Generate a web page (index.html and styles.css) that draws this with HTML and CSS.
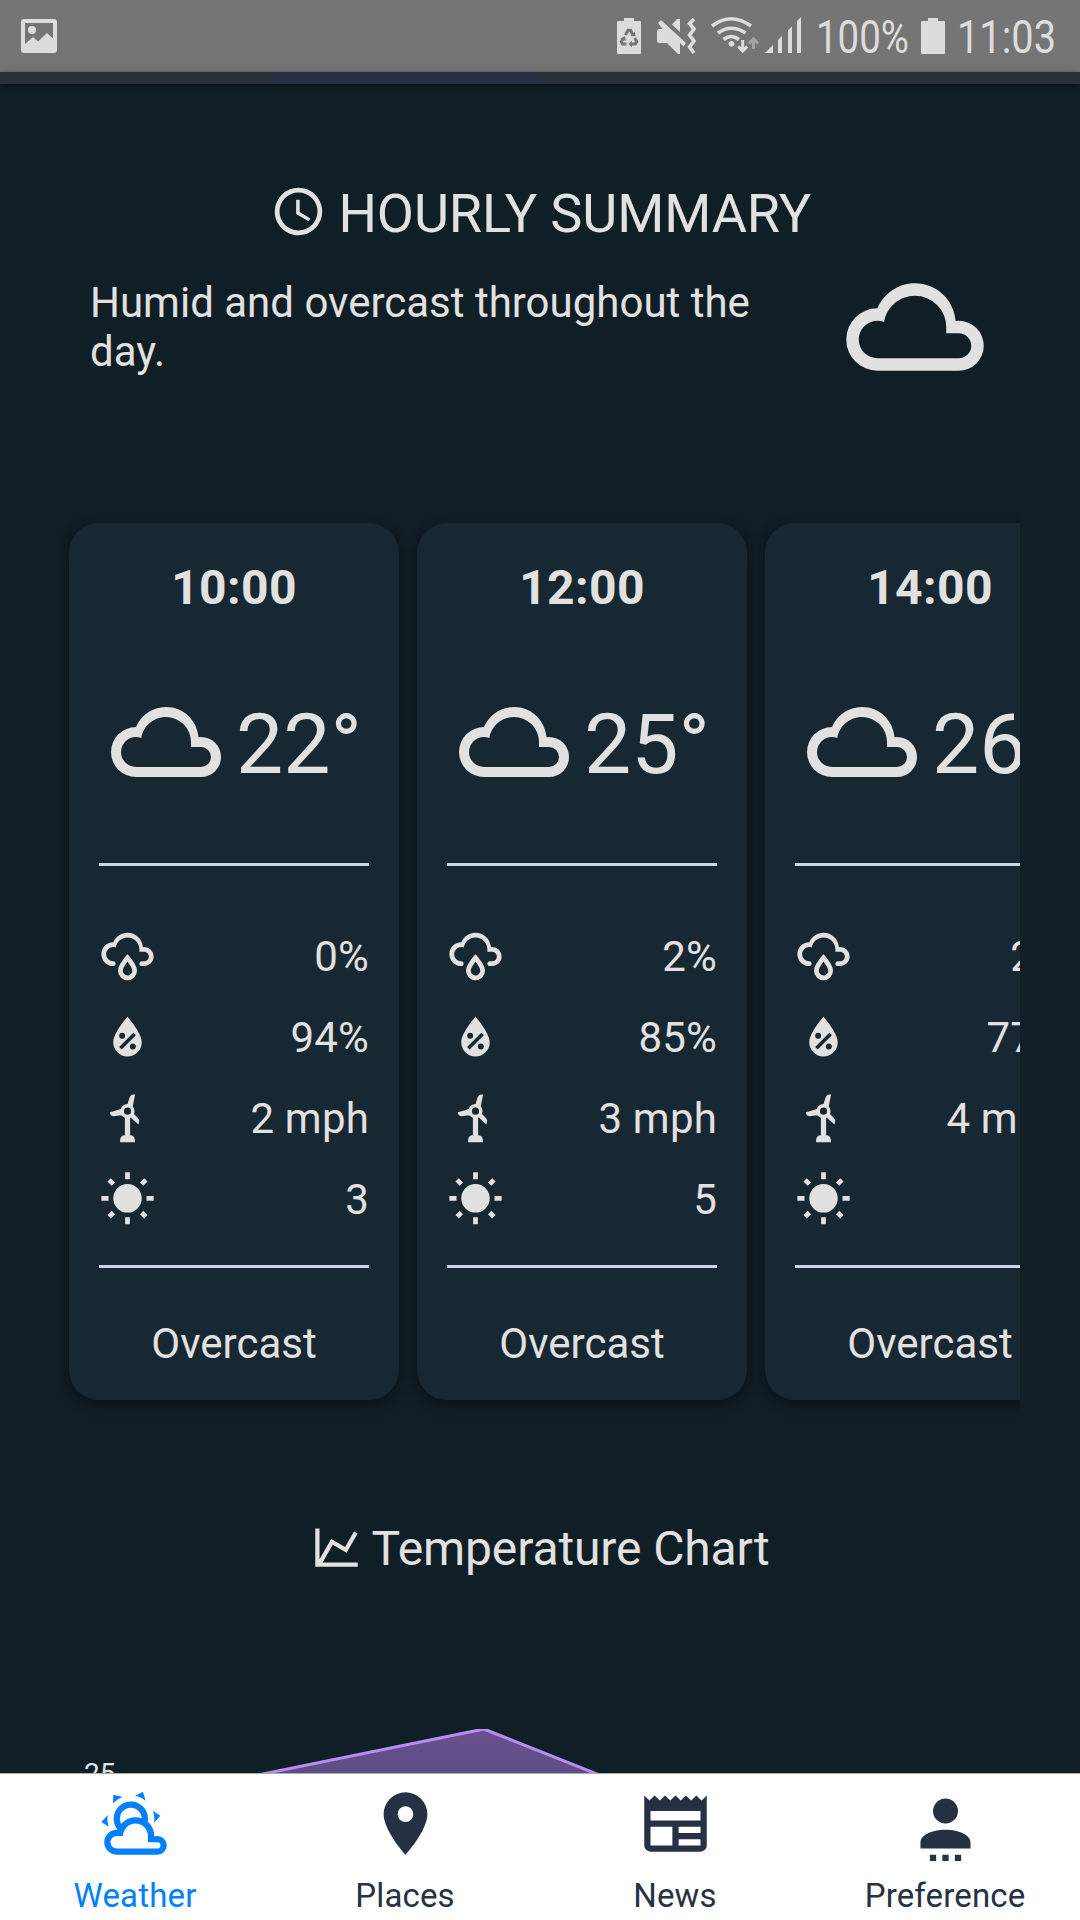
FILE: index.html
```html
<!DOCTYPE html>
<html lang="en">
<head>
<meta charset="utf-8">
<title>Weather</title>
<link rel="stylesheet" href="styles.css">
</head>
<body>
<svg class="sprite" aria-hidden="true">
  <symbol id="cloud" viewBox="0 0 24 24"><path d="M6,19A5,5 0 0,1 1,14A5,5 0 0,1 6,9C7,6.65 9.3,5 12,5C15.43,5 18.24,7.66 18.5,11.03L19,11A4,4 0 0,1 23,15A4,4 0 0,1 19,19H6M19,13H17V12A5,5 0 0,0 12,7C9.5,7 7.45,8.82 7.06,11.19C6.73,11.07 6.37,11 6,11A3,3 0 0,0 3,14A3,3 0 0,0 6,17H19A2,2 0 0,0 21,15A2,2 0 0,0 19,13Z"/></symbol>
  <symbol id="clock" viewBox="0 0 24 24"><path d="M12,20A8,8 0 0,0 20,12A8,8 0 0,0 12,4A8,8 0 0,0 4,12A8,8 0 0,0 12,20M12,2A10,10 0 0,1 22,12A10,10 0 0,1 12,22C6.47,22 2,17.5 2,12A10,10 0 0,1 12,2M12.5,7V12.25L17,14.92L16.25,16.15L11,13V7H12.5Z"/></symbol>
  <symbol id="rain" viewBox="0 0 24 24"><path d="M6,14.03A1,1 0 0,1 7,15.03C7,15.58 6.55,16.03 6,16.03C3.24,16.03 1,13.79 1,11.03C1,8.27 3.24,6.03 6,6.03C7,3.68 9.3,2.03 12,2.03C15.43,2.03 18.24,4.69 18.5,8.06L19,8.03A4,4 0 0,1 23,12.03C23,14.23 21.21,16.03 19,16.03H18C17.45,16.03 17,15.58 17,15.03C17,14.47 17.45,14.03 18,14.03H19A2,2 0 0,0 21,12.03A2,2 0 0,0 19,10.03H17V9.03C17,6.27 14.76,4.03 12,4.03C9.5,4.03 7.45,5.84 7.06,8.21C6.73,8.09 6.37,8.03 6,8.03A3,3 0 0,0 3,11.03A3,3 0 0,0 6,14.03M12,14.15C12.18,14.39 12.37,14.66 12.56,14.94C13,15.56 14,17.03 14,18C14,19.11 13.1,20 12,20A2,2 0 0,1 10,18C10,17.03 11,15.56 11.44,14.94C11.63,14.66 11.82,14.4 12,14.15M12,11.03L11.5,11.59C11.5,11.59 10.65,12.55 9.79,13.81C8.93,15.06 8,16.56 8,18A4,4 0 0,0 12,22A4,4 0 0,0 16,18C16,16.56 15.07,15.06 14.21,13.81C13.35,12.55 12.5,11.59 12.5,11.59"/></symbol>
  <symbol id="humidity" viewBox="0 0 24 24"><path d="M12,3.25C12,3.25 6,10 6,14C6,17.32 8.69,20 12,20A6,6 0 0,0 18,14C18,10 12,3.25 12,3.25M14.47,9.97L15.53,11.03L9.53,17.03L8.47,15.97M9.75,10A1.25,1.25 0 0,1 11,11.25A1.25,1.25 0 0,1 9.75,12.5A1.25,1.25 0 0,1 8.5,11.25A1.25,1.25 0 0,1 9.75,10M14.25,14.5A1.25,1.25 0 0,1 15.5,15.75A1.25,1.25 0 0,1 14.25,17A1.25,1.25 0 0,1 13,15.75A1.25,1.25 0 0,1 14.25,14.5Z" fill-rule="evenodd"/></symbol>
  <symbol id="turbine" viewBox="0 0 24 24"><path fill-rule="evenodd" d="M12,5.9A3,3 0 0,1 12,11.9A3,3 0 0,1 12,5.9M12,7.4A1.5,1.5 0 0,0 12,10.4A1.5,1.5 0 0,0 12,7.4Z"/><path d="M11.9,6.3L12.8,3.4C13.1,2.4 13.7,1.9 14.4,1.9H15.2L14.2,6.9L13.4,6.5ZM9.5,7.9L5.8,9.1C5,9.3 4.6,9.3 4.6,9.7C4.7,10.5 5.2,11 6,11C7,11 8.2,10.7 9.7,10.7ZM14.3,9.7L16.2,11.6C16.8,12.3 17,12.8 16.9,13.3L16.6,14.5L13,11.3ZM10.9,11.5H13.1V19C14.3,19 15.1,19.8 15.1,21V22H8.9V21C8.9,19.8 9.7,19 10.9,19Z"/></symbol>
  <symbol id="sun" viewBox="0 0 24 24"><path d="M3.55,18.54L4.96,19.95L6.76,18.16L5.34,16.74M11,22.45C11.32,22.45 13,22.45 13,22.45V19.5H11M12,5.5A6,6 0 0,0 6,11.5A6,6 0 0,0 12,17.5A6,6 0 0,0 18,11.5C18,8.18 15.31,5.5 12,5.5M20,12.5H23V10.5H20M17.24,18.16L19.04,19.95L20.45,18.54L18.66,16.74M20.45,4.46L19.04,3.05L17.24,4.84L18.66,6.26M13,0.55H11V3.5H13M4,10.5H1V12.5H4M6.76,4.84L4.96,3.05L3.55,4.46L5.34,6.26L6.76,4.84Z"/></symbol>
  <symbol id="chart" viewBox="0 0 24 24"><path d="M16,11.78L20.24,4.45L21.97,5.45L16.74,14.5L10.23,10.75L5.46,19H22V21H2V3H4V17.54L9.5,8L16,11.78Z"/></symbol>
  <symbol id="partly" viewBox="0 0 24 24"><path d="M12.74,5.47C15.1,6.5 16.35,9.03 15.92,11.46C17.19,12.56 18,14.19 18,16V16.17C18.31,16.06 18.65,16 19,16A3,3 0 0,1 22,19A3,3 0 0,1 19,22H6A4,4 0 0,1 2,18A4,4 0 0,1 6,14H6.27C5,12.45 4.6,10.24 5.5,8.26C6.72,5.5 9.97,4.24 12.74,5.47M11.93,7.3C10.16,6.5 8.09,7.31 7.31,9.07C6.85,10.09 6.93,11.22 7.41,12.13C8.5,10.83 10.16,10 12,10C12.7,10 13.38,10.12 14,10.34C13.94,9.06 13.18,7.86 11.93,7.3M13.55,3.64C13,3.4 12.45,3.23 11.88,3.12L14.37,1.82L15.27,4.71C14.76,4.29 14.19,3.93 13.55,3.64M6.09,4.44C5.6,4.79 5.17,5.19 4.8,5.63L4.91,2.82L7.87,3.5C7.25,3.71 6.65,4.03 6.09,4.44M18,9.71C17.91,9.12 17.78,8.55 17.59,8L19.97,9.5L17.92,11.73C18.03,11.08 18.05,10.4 18,9.71M3.04,11.3C3.11,11.9 3.24,12.47 3.43,13L1.06,11.5L3.1,9.28C3,9.93 2.97,10.61 3.04,11.3M19,18H16V16A4,4 0 0,0 12,12A4,4 0 0,0 8,16H6A2,2 0 0,0 4,18A2,2 0 0,0 6,20H19A1,1 0 0,0 20,19A1,1 0 0,0 19,18Z"/></symbol>
  <symbol id="marker" viewBox="0 0 24 24"><path d="M12,11.5A2.5,2.5 0 0,1 9.5,9A2.5,2.5 0 0,1 12,6.5A2.5,2.5 0 0,1 14.5,9A2.5,2.5 0 0,1 12,11.5M12,2A7,7 0 0,0 5,9C5,14.25 12,22 12,22C12,22 19,14.25 19,9A7,7 0 0,0 12,2Z"/></symbol>
  <symbol id="news" viewBox="0 0 24 24"><path d="M20,11H4V8H20M20,15H13V13H20M20,19H13V17H20M11,19H4V13H11M20.33,4.67L18.67,3L17,4.67L15.33,3L13.67,4.67L12,3L10.33,4.67L8.67,3L7,4.67L5.33,3L3.67,4.67L2,3V19A2,2 0 0,0 4,21H20A2,2 0 0,0 22,19V3L20.33,4.67Z"/></symbol>
  <symbol id="account" viewBox="0 0 24 24"><path d="M12,4A4,4 0 0,1 16,8A4,4 0 0,1 12,12A4,4 0 0,1 8,8A4,4 0 0,1 12,4M12,14C16.42,14 20,15.79 20,18V20H4V18C4,15.79 7.58,14 12,14M7,22H9V24H7V22M11,22H13V24H11V22M15,22H17V24H15V22Z"/></symbol>
</svg>

<header class="status">
  <svg class="status-photo" viewBox="0 0 36 34"><path fill-rule="evenodd" d="M3,0H33Q36,0 36,3V31Q36,34 33,34H3Q0,34 0,31V3Q0,0 3,0ZM4,4V25L12,18L17,22.5L26,14L32,19.5V4ZM11,7A4,4 0 0,1 11,15A4,4 0 0,1 11,7Z"/></svg>
  <svg class="status-right" viewBox="600 0 480 72">
    <path d="M624,18H634V21H640Q641,21 641,22V53Q641,54 640,54H618Q617,54 617,53V22Q617,21 618,21H624Z"/>
    <g class="recycle"><path d="M625.5,35L628,30.2H630.5L633,35M634.8,38L636.8,41.8L635.3,43.9H630.5M626.5,43.9H622.5L621.3,41.8L623.6,38"/></g>
    <path class="recycle-tips" d="M630.5,36L635.5,36.2L634.8,31.5ZM632,40.5V47.5L628.5,44ZM620.3,38.5L625,36.3L625.8,41Z"/>
    <path d="M657,32Q657,29 660,29H662.5L658,23L661,20L686,43L683.5,46.5L680,43V54H678L667,43H659Q657,43 657,40ZM672,24.5L677,19H680V32Z"/>
    <path class="stroke" d="M694,19L689.5,23.5L694,29L689.5,35L694,41L689.5,47L694,53"/>
    <g class="stroke"><path d="M712,26Q731,11.5 751,26M718,33Q731,23.5 745.5,33M723.5,39.5Q731,33.5 739,39.5"/></g>
    <circle cx="731.5" cy="43.8" r="2.8"/>
    <path class="stroke thin" d="M742.7,40V51M738.3,46.5L742.7,51L747.2,46.5"/>
    <path class="stroke thin dim" d="M753.5,49V39M749,43.5L753.5,38.8L758,43.5"/>
    <path d="M765,53L773,45V53ZM778,40L782,36V53H778ZM788,30.5L792,26.5V53H788ZM797,21L801,17V53H797Z"/>
    <text x="816" y="53" font-size="45.5" textLength="93" lengthAdjust="spacingAndGlyphs">100%</text>
    <path d="M928,18H938V21H944Q945,21 945,22V53Q945,54 944,54H922Q921,54 921,53V22Q921,21 922,21H928Z"/>
    <text x="957" y="53" font-size="45.5" textLength="99" lengthAdjust="spacingAndGlyphs">11:03</text>
  </svg>
</header>
<div class="tab-strip"><span class="tab-indicator"></span></div>

<main class="content">
  <h1 class="title"><svg class="title-icon"><use href="#clock"/></svg>HOURLY SUMMARY</h1>
  <section class="summary">
    <p class="summary-text">Humid and overcast throughout the day.</p>
    <svg class="summary-icon"><use href="#cloud"/></svg>
  </section>

  <section class="hours">
    <article class="card">
      <h2 class="time">10:00</h2>
      <div class="now"><svg class="now-icon"><use href="#cloud"/></svg><span class="temp">22°</span></div>
      <hr class="rule">
      <ul class="stats">
        <li class="stat"><svg class="stat-icon"><use href="#rain"/></svg><span>0%</span></li>
        <li class="stat"><svg class="stat-icon"><use href="#humidity"/></svg><span>94%</span></li>
        <li class="stat"><svg class="stat-icon"><use href="#turbine"/></svg><span>2 mph</span></li>
        <li class="stat"><svg class="stat-icon"><use href="#sun"/></svg><span>3</span></li>
      </ul>
      <hr class="rule rule-low">
      <p class="sky">Overcast</p>
    </article>
    <article class="card">
      <h2 class="time">12:00</h2>
      <div class="now"><svg class="now-icon"><use href="#cloud"/></svg><span class="temp">25°</span></div>
      <hr class="rule">
      <ul class="stats">
        <li class="stat"><svg class="stat-icon"><use href="#rain"/></svg><span>2%</span></li>
        <li class="stat"><svg class="stat-icon"><use href="#humidity"/></svg><span>85%</span></li>
        <li class="stat"><svg class="stat-icon"><use href="#turbine"/></svg><span>3 mph</span></li>
        <li class="stat"><svg class="stat-icon"><use href="#sun"/></svg><span>5</span></li>
      </ul>
      <hr class="rule rule-low">
      <p class="sky">Overcast</p>
    </article>
    <article class="card">
      <h2 class="time">14:00</h2>
      <div class="now"><svg class="now-icon"><use href="#cloud"/></svg><span class="temp">26°</span></div>
      <hr class="rule">
      <ul class="stats">
        <li class="stat"><svg class="stat-icon"><use href="#rain"/></svg><span>2%</span></li>
        <li class="stat"><svg class="stat-icon"><use href="#humidity"/></svg><span>77%</span></li>
        <li class="stat"><svg class="stat-icon"><use href="#turbine"/></svg><span>4 mph</span></li>
        <li class="stat"><svg class="stat-icon"><use href="#sun"/></svg><span>6</span></li>
      </ul>
      <hr class="rule rule-low">
      <p class="sky">Overcast</p>
    </article>
  </section>

  <h2 class="chart-title"><svg class="chart-icon"><use href="#chart"/></svg>Temperature Chart</h2>
  <svg class="plot" viewBox="0 1577 1080 196">
    <defs>
      <linearGradient id="area" x1="0" y1="0" x2="0" y2="1"><stop offset="0" stop-color="#68528f"/><stop offset="1" stop-color="#5e4c84"/></linearGradient>
      <clipPath id="plot-clip"><rect x="120" y="1729" width="900" height="44"/></clipPath>
    </defs>
    <g clip-path="url(#plot-clip)">
      <path fill="url(#area)" d="M243,1778L484,1729L607,1778Z"/>
      <path class="plot-line" d="M243,1778L484,1729L607,1778"/>
    </g>
    <text class="axis" x="84" y="1783">25</text>
  </svg>
</main>

<nav class="nav">
  <a class="nav-item active"><svg class="nav-icon"><use href="#partly"/></svg><span>Weather</span></a>
  <a class="nav-item"><svg class="nav-icon"><use href="#marker"/></svg><span>Places</span></a>
  <a class="nav-item"><svg class="nav-icon"><use href="#news"/></svg><span>News</span></a>
  <a class="nav-item"><svg class="nav-icon"><use href="#account"/></svg><span>Preference</span></a>
</nav>
</body>
</html>
```
FILE: styles.css
```css
* { box-sizing: border-box; margin: 0; padding: 0; }

body {
  width: 1080px;
  height: 1920px;
  display: flex;
  flex-direction: column;
  overflow: hidden;
  background: #101e25;
  color: #e1e1e1;
  fill: currentColor;
  font-family: Roboto, "Liberation Sans", sans-serif;
}

svg { display: block; flex: none; }
.sprite { display: none; }

.status {
  height: 72px;
  flex: none;
  display: flex;
  justify-content: space-between;
  background: #757575;
  color: #dcdcdc;
}
.status-photo { width: 36px; height: 34px; margin: 19px 0 0 21px; }
.status-right { width: 480px; height: 72px; }
.stroke { fill: none; stroke: currentColor; stroke-width: 3.6; }
.thin { stroke-width: 3; }
.dim { stroke: #a3a3a3; }
.recycle { fill: none; stroke: #757575; stroke-width: 3; }
.recycle-tips { fill: #757575; }

.tab-strip {
  height: 12px;
  flex: none;
  display: flex;
  background: #273338;
  box-shadow: 0 2px 8px rgba(0, 0, 0, .4);
}
.tab-indicator { width: 270px; margin-left: 270px; background: #273144; }

.content {
  height: 1689px;
  flex: none;
  display: flex;
  flex-direction: column;
  padding-top: 98px;
  overflow: hidden;
}

.title {
  display: flex;
  justify-content: center;
  gap: 11.5px;
  padding-left: 1px;
  font-size: 54px;
  font-weight: 400;
  line-height: 64px;
  letter-spacing: -.1px;
}
.title-icon { width: 57px; height: 57px; margin-top: 1px; }

.summary {
  display: flex;
  align-items: center;
  justify-content: space-between;
  margin-top: 6px;
  padding: 0 90px;
}
.summary-text { width: 690px; font-size: 42px; line-height: 49px; }
.summary-icon { width: 150px; height: 150px; }

.hours {
  display: flex;
  gap: 18px;
  width: 960px;
  margin: 98px 0 0 60px;
  padding: 23px 9px 24px;
  overflow: hidden;
}
.card {
  width: 330px;
  height: 877px;
  flex: none;
  padding: 37px 30px 0;
  border-radius: 30px;
  background: #182832;
  box-shadow: 0 4px 14px rgba(0, 0, 0, .4);
}
.time {
  font-size: 48px;
  font-weight: 700;
  line-height: 56px;
  letter-spacing: .4px;
  text-align: center;
}
.now {
  display: flex;
  align-items: center;
  justify-content: center;
  gap: 10px;
  height: 120px;
  margin-top: 66px;
}
.now-icon { width: 120px; height: 120px; }
.temp { margin-top: 6px; font-size: 84px; line-height: 98px; }
.rule { height: 3px; margin-top: 61px; border: 0; background: #c9d7e8; }
.stats {
  display: flex;
  flex-direction: column;
  gap: 24px;
  margin-top: 62px;
  list-style: none;
}
.stat {
  display: flex;
  align-items: center;
  justify-content: space-between;
  height: 57px;
  font-size: 42px;
  line-height: 49px;
  letter-spacing: .2px;
}
.stat-icon { width: 57px; height: 57px; }
.rule-low { margin-top: 37px; background: #cdd3e8; }
.sky { margin-top: 51px; font-size: 42px; line-height: 49px; text-align: center; }

.chart-title {
  display: flex;
  justify-content: center;
  gap: 10px;
  margin-top: 97px;
  font-size: 48px;
  font-weight: 400;
  line-height: 56px;
  letter-spacing: -.12px;
}
.chart-icon { width: 51px; height: 51px; margin-top: 1px; }
.plot { width: 1080px; height: 196px; }
.plot-line { fill: none; stroke: #b78cf5; stroke-width: 3; }
.axis { font-size: 28px; }

.nav {
  height: 147px;
  flex: none;
  display: flex;
  border-top: 1px solid #a9adaf;
  background: #fff;
  color: #273144;
}
.nav-item {
  flex: 1;
  display: flex;
  flex-direction: column;
  align-items: center;
  padding-top: 12px;
  font-size: 33px;
  line-height: 39px;
  letter-spacing: .15px;
}
.nav-icon { width: 75px; height: 75px; margin-bottom: 15px; }
.active { color: #007fff; }
```
